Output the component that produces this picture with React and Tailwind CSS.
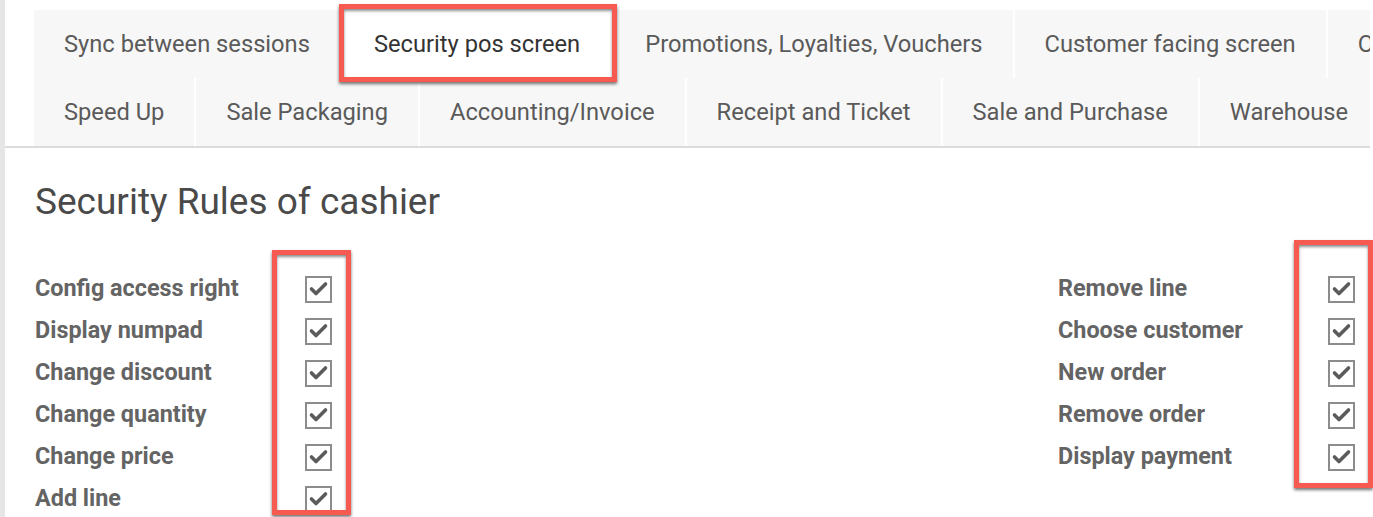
const row1 = [
  "Sync between sessions",
  "Security pos screen",
  "Promotions, Loyalties, Vouchers",
  "Customer facing screen",
  "Orders",
];
const row2 = [
  "Speed Up",
  "Sale Packaging",
  "Accounting/Invoice",
  "Receipt and Ticket",
  "Sale and Purchase",
  "Warehouse",
];

const leftRules = [
  "Config access right",
  "Display numpad",
  "Change discount",
  "Change quantity",
  "Change price",
  "Add line",
];
const rightRules = [
  "Remove line",
  "Choose customer",
  "New order",
  "Remove order",
  "Display payment",
];

function Check() {
  return (
    <div className="w-[27px] h-[27px] border-2 border-[#8c8c8c] bg-white shrink-0">
      <svg width="23" height="23" viewBox="0 0 23 23">
        <path
          d="M4.5 11 L9 15.5 L18.5 6"
          fill="none"
          stroke="#5b5b5b"
          strokeWidth="3.6"
          strokeLinecap="round"
          strokeLinejoin="round"
        />
      </svg>
    </div>
  );
}

function Tab({ label, active }) {
  return (
    <div
      className={
        active
          ? "h-full pt-[2px] pl-[32px] pr-[33px] flex items-center bg-white text-[#333] whitespace-nowrap border-r-2 border-white shrink-0"
          : "h-full pt-[2px] px-[30px] flex items-center bg-[#f7f7f7] text-[#5a5a5a] whitespace-nowrap border-r-2 border-white shrink-0"
      }
    >
      {label}
    </div>
  );
}

function Rule({ label }) {
  return (
    <div className="h-[42px] flex items-center">
      <span className="w-[270px] text-[23.4px] font-bold text-[#646464]">
        {label}
      </span>
      <Check />
    </div>
  );
}

const annot =
  "absolute border-[5px] border-[#f65a50] shadow-[0_2px_3px_rgba(0,0,0,0.55),inset_0_2px_3px_rgba(0,0,0,0.45)] pointer-events-none";

export default function App() {
  return (
    <div className="relative h-[517px] overflow-hidden bg-white flex font-['Roboto',sans-serif]">
      <div className="w-[5px] bg-[#e6e6e6] shrink-0" />

      <div className="w-[1365px]">
        <div className="pt-[10px] pl-[29px] border-b-2 border-[#dcdcdc] overflow-hidden">
          <div className="flex h-[68px] text-[23.7px]">
            {row1.map((t) => (
              <Tab key={t} label={t} active={t === "Security pos screen"} />
            ))}
          </div>
          <div className="flex h-[68px] text-[23.7px]">
            {row2.map((t) => (
              <Tab key={t} label={t} />
            ))}
          </div>
        </div>

        <div className="pl-[30px] pr-[15px]">
          <h1 className="mt-[32px] text-[37px] leading-[44px] text-[#4a4a4a]">
            Security Rules of cashier
          </h1>
          <div className="mt-[44px] flex justify-between">
            <div className="flex flex-col">
              {leftRules.map((r) => (
                <Rule key={r} label={r} />
              ))}
            </div>
            <div className="flex flex-col">
              {rightRules.map((r) => (
                <Rule key={r} label={r} />
              ))}
            </div>
          </div>
        </div>
      </div>

      <div className={annot + " left-[339px] top-[4px] w-[278px] h-[78px]"} />
      <div className={annot + " left-[272px] top-[250px] w-[79px] h-[265px]"} />
      <div className={annot + " left-[1294px] top-[240px] w-[79px] h-[248px]"} />
    </div>
  );
}
